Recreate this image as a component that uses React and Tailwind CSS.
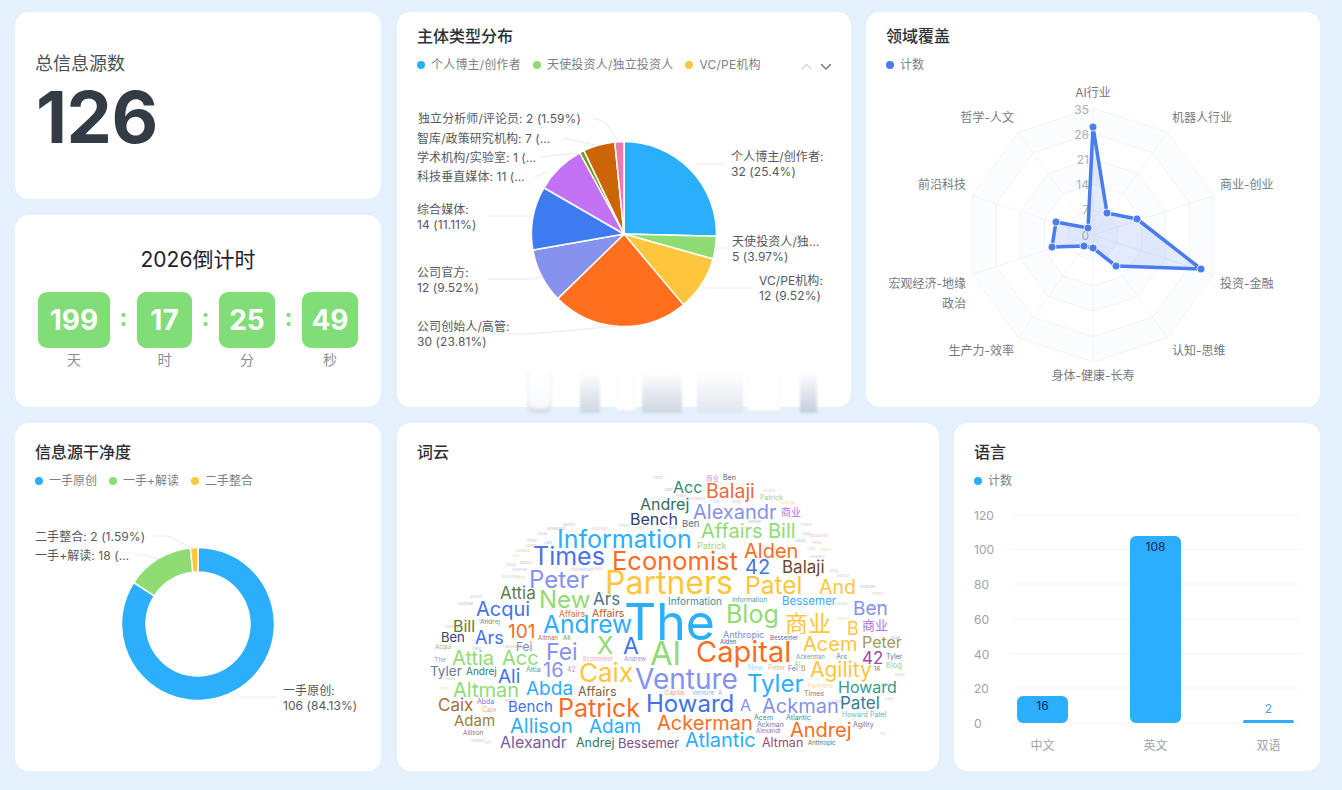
import { Fragment } from "react";

const BLUE = "#2baefc";
const GREEN = "#8fdc75";
const YELLOW = "#ffc53d";
const ORANGE = "#f96e22";
const PERI = "#8592ee";
const ROYAL = "#4272ea";

function polar(cx, cy, r, deg) {
  const a = ((deg - 90) * Math.PI) / 180;
  return [cx + r * Math.cos(a), cy + r * Math.sin(a)];
}

function slicePath(cx, cy, r, inner, from, to) {
  const [x1, y1] = polar(cx, cy, r, from);
  const [x2, y2] = polar(cx, cy, r, to);
  const large = to - from > 180 ? 1 : 0;
  if (!inner) return `M${cx} ${cy}L${x1} ${y1}A${r} ${r} 0 ${large} 1 ${x2} ${y2}Z`;
  const [x3, y3] = polar(cx, cy, inner, to);
  const [x4, y4] = polar(cx, cy, inner, from);
  return `M${x1} ${y1}A${r} ${r} 0 ${large} 1 ${x2} ${y2}L${x3} ${y3}A${inner} ${inner} 0 ${large} 0 ${x4} ${y4}Z`;
}

function Slices({ cx, cy, r, inner, data }) {
  const total = data.reduce((s, d) => s + d[0], 0);
  let at = 0;
  return data.map(([v, color]) => {
    const from = at;
    at += (v / total) * 360;
    return <path key={color} d={slicePath(cx, cy, r, inner, from, at)} fill={color} stroke="#fff" strokeWidth="1.5" />;
  });
}

function Legend({ items, wide }) {
  return (
    <div className={`mt-[7px] flex h-[22px] items-center gap-3 text-xs text-[#7b7f86] ${wide ? "tracking-[0.2px]" : ""}`}>
      {items.map(([label, color]) => (
        <div key={label} className="flex items-center gap-[6px]">
          <span className="h-2 w-2 rounded-full" style={{ background: color }} />
          <span>{label}</span>
        </div>
      ))}
    </div>
  );
}

function Title({ children }) {
  return <div className="h-[22px] text-base leading-[22px] font-medium text-[#2b2f36]">{children}</div>;
}

function Lead({ d }) {
  return <path d={d} fill="none" stroke="#e8eaed" strokeWidth="1" />;
}

function Label({ x, y, lines, anchor }) {
  return lines.map((t, i) => (
    <text key={t} x={x} y={y + i * 14.5} textAnchor={anchor} fontSize="12" letterSpacing="0.08" fill="#55595f">
      {t}
    </text>
  ));
}

function StatCard() {
  return (
    <div className="flex h-[187px] flex-col rounded-[14px] bg-white pt-[40px] pl-[20px]">
      <div className="text-[18px] leading-6 text-[#4a4f57]">总信息源数</div>
      <div className="mt-[1px] ml-[1px] text-[72px] leading-[80px] font-bold tracking-[-0.5px] text-[#333b45]">126</div>
    </div>
  );
}

function CountBox({ value, unit, width }) {
  return (
    <div className="flex flex-col items-center">
      <div className={`flex h-14 items-center justify-center rounded-[9px] bg-[#80dd78] text-[28px] font-bold text-white ${width}`}>
        {value}
      </div>
      <div className="mt-[2px] text-sm leading-5 text-[#8a8d92]">{unit}</div>
    </div>
  );
}

function Colon() {
  return <div className="flex h-[52px] w-[27px] items-center justify-center text-[24px] font-bold text-[#80dd78]">:</div>;
}

function CountdownCard() {
  return (
    <div className="flex h-[192px] flex-col items-center rounded-[14px] bg-white pt-[30px]">
      <div className="text-[21px] leading-[30px] text-[#1f2329]">2026倒计时</div>
      <div className="mt-[17px] flex">
        <CountBox value="199" unit="天" width="w-[72px]" />
        <Colon />
        <CountBox value="17" unit="时" width="w-[55px]" />
        <Colon />
        <CountBox value="25" unit="分" width="w-[56px]" />
        <Colon />
        <CountBox value="49" unit="秒" width="w-[56px]" />
      </div>
    </div>
  );
}

function PieCard() {
  const data = [
    [32, BLUE], [5, GREEN], [12, YELLOW], [30, "#ff6f1e"], [12, PERI],
    [14, "#3f7bf0"], [11, "#c472f5"], [1, "#6f9a1f"], [7, "#cc6508"], [2, "#ee79b0"],
  ];
  return (
    <div className="relative h-[395px] w-[454px] rounded-[14px] bg-white">
      <div className="relative px-5 pt-[13px]">
        <Title>主体类型分布</Title>
        <Legend wide items={[["个人博主/创作者", BLUE], ["天使投资人/独立投资人", GREEN], ["VC/PE机构", "#f6c944"]]} />
        <svg className="absolute top-[49px] right-[19px]" width="36" height="12" viewBox="0 0 36 12" fill="none" strokeWidth="1.3" strokeLinecap="round">
          <path d="M6 8l4.5-4.5L15 8" stroke="#d4d6da" />
          <path d="M25.5 3.5L30 8l4.5-4.5" stroke="#6b6f76" />
        </svg>
      </div>
      <svg className="block h-[331px] w-full" viewBox="397 76 454 331">
        <Slices cx={624} cy={234} r={92.5} data={data} />
        <Lead d="M691 170L697 164H725" />
        <Lead d="M716 248H727" />
        <Lead d="M700 285L706 288H753" />
        <Lead d="M487 334H530L618 326" />
        <Lead d="M488 279H535L543 276" />
        <Lead d="M487 216H532" />
        <Lead d="M535 177L547 172" />
        <Lead d="M540 157L578 153" />
        <Lead d="M563 138L595 145" />
        <Lead d="M593 118L605 122L618 141" />
        <Label x={731} y={161} lines={["个人博主/创作者:", "32 (25.4%)"]} />
        <Label x={732} y={246} lines={["天使投资人/独…", "5 (3.97%)"]} />
        <Label x={759} y={285} lines={["VC/PE机构:", "12 (9.52%)"]} />
        <Label x={417} y={331} lines={["公司创始人/高管:", "30 (23.81%)"]} />
        <Label x={417} y={277} lines={["公司官方:", "12 (9.52%)"]} />
        <Label x={417} y={214} lines={["综合媒体:", "14 (11.11%)"]} />
        <Label x={417} y={181} lines={["科技垂直媒体: 11 (…"]} />
        <Label x={417} y={162} lines={["学术机构/实验室: 1 (…"]} />
        <Label x={417} y={143} lines={["智库/政策研究机构: 7 (…"]} />
        <Label x={418} y={123} lines={["独立分析师/评论员: 2 (1.59%)"]} />
      </svg>
      {/* blurred strip lying over the card's bottom edge */}
      <div className="absolute top-[360px] left-[128px] flex h-[41px] w-[296px] blur-[1.5px]">
        <div className="ml-[2px] h-full w-[25px] rounded-b-lg bg-gradient-to-b from-white to-[#f6f8fb] shadow-[inset_0_-4px_3px_#d3d9e1]" />
        <div className="ml-[28px] h-full w-[20px] bg-gradient-to-b from-white to-[#ccd6e2]" />
        <div className="ml-[17px] h-full w-[18px] bg-white shadow-[inset_0_-2px_2px_#dfe4ea]" />
        <div className="ml-[7px] h-full w-[40px] bg-gradient-to-b from-white to-[#ccd5e0]" />
        <div className="ml-[15px] h-full w-[20px] bg-gradient-to-b from-white to-[#dfe6ef]" />
        <div className="h-full w-[26px] bg-gradient-to-b from-white to-[#dfe6ef]" />
        <div className="ml-[5px] h-full w-[32px] bg-white shadow-[inset_0_-2px_2px_#e3e8ee]" />
        <div className="ml-[20px] h-full w-[17px] bg-gradient-to-b from-white to-[#c3cddb]" />
      </div>
    </div>
  );
}

function RadarCard() {
  const cx = 1093;
  const cy = 235;
  const ring = (r) =>
    Array.from({ length: 10 }, (_, i) => polar(cx, cy, r, i * 36).join(",")).join(" ");
  const pts = [
    [1093, 127], [1107, 213], [1137, 219], [1201, 269], [1116, 266],
    [1093, 248], [1084, 246], [1052, 247], [1056, 222], [1088, 228],
  ];
  const right = [
    ["机器人行业", 1172, 122], ["商业-创业", 1220, 189], ["投资-金融", 1220, 288], ["认知-思维", 1172, 355],
  ];
  const left = [
    ["哲学-人文", 1014, 122], ["前沿科技", 966, 189], ["宏观经济-地缘", 966, 288], ["政治", 966, 308], ["生产力-效率", 1014, 355],
  ];
  const ticks = [["35", 114], ["28", 139], ["21", 164], ["14", 189], ["7", 214], ["0", 240]];
  return (
    <div className="h-[395px] w-[454px] rounded-[14px] bg-white">
      <div className="px-5 pt-[13px]">
        <Title>领域覆盖</Title>
        <Legend items={[["计数", "#4a7cee"]]} />
      </div>
      <svg className="block h-[331px] w-full" viewBox="866 76 454 331">
        {[127, 101.6, 76.2, 50.8, 25.4].map((r, i) => (
          <polygon key={r} points={ring(r)} fill={i % 2 ? "#fff" : "#fbfcfe"} stroke="#f3f4f7" strokeWidth="1" />
        ))}
        {Array.from({ length: 10 }, (_, i) => {
          const [x, y] = polar(cx, cy, 127, i * 36);
          return <line key={i} x1={cx} y1={cy} x2={x} y2={y} stroke="#f3f4f7" />;
        })}
        {ticks.map(([t, y]) => (
          <text key={t} x={1089} y={y} textAnchor="end" fontSize="12" fill="#adafb3">{t}</text>
        ))}
        <polygon points={pts.map((p) => p.join(",")).join(" ")} fill="#4a7cee" fillOpacity="0.16" stroke="#4a7cee" strokeWidth="3.5" strokeLinejoin="round" />
        {pts.map(([x, y]) => (
          <circle key={x + "-" + y} cx={x} cy={y} r="4" fill="#4a7cee" stroke="#fff" strokeWidth="0.8" />
        ))}
        <text x={1093} y={97} textAnchor="middle" fontSize="12" fill="#75797f">AI行业</text>
        <text x={1093} y={380} textAnchor="middle" fontSize="12" fill="#75797f">身体-健康-长寿</text>
        {right.map(([t, x, y]) => (
          <text key={t} x={x} y={y} fontSize="12" fill="#75797f">{t}</text>
        ))}
        {left.map(([t, x, y]) => (
          <text key={t} x={x} y={y} textAnchor="end" fontSize="12" fill="#75797f">{t}</text>
        ))}
      </svg>
    </div>
  );
}

function DonutCard() {
  return (
    <div className="h-[348px] w-[366px] rounded-[14px] bg-white">
      <div className="px-5 pt-[18px]">
        <Title>信息源干净度</Title>
        <Legend items={[["一手原创", BLUE], ["一手+解读", GREEN], ["二手整合", YELLOW]]} />
      </div>
      <svg className="block h-[279px] w-full" viewBox="15 492 366 279">
        <Slices cx={198} cy={624} r={76.5} inner={52} data={[[106, BLUE], [18, GREEN], [2, YELLOW]]} />
        <Lead d="M153 536H168L192 548" />
        <Lead d="M137 555H146L158 559" />
        <Lead d="M236 692L240 697H277" />
        <Label x={35} y={541} lines={["二手整合: 2 (1.59%)"]} />
        <Label x={35} y={560} lines={["一手+解读: 18 (…"]} />
        <Label x={283} y={695} lines={["一手原创:", "106 (84.13%)"]} />
      </svg>
    </div>
  );
}

const WORDS = [
  ["The", 624, 640, 50, BLUE], ["Partners", 605, 594, 32, YELLOW], ["Capital", 696, 662, 29, ORANGE],
  ["Venture", 635, 689, 28, PERI], ["Economist", 612, 570, 25.5, ORANGE], ["Information", 557, 548, 25, BLUE],
  ["Times", 533, 565, 25, "#4b72e8"], ["Peter", 529, 588, 24, PERI], ["New", 539, 608, 24, GREEN],
  ["Attia", 500, 599, 17, "#5c7a52"], ["Ars", 593, 605, 17, "#4c7294"], ["Affairs", 559, 617, 8.5, "#e26b4a"],
  ["Affairs", 592, 617, 10.5, "#b5572f"], ["Acqui", 476, 616, 20, ROYAL], ["Information", 668, 605, 10, "#3d8ea0"],
  ["Andrej", 640, 510, 16, "#2f6f5e"], ["Acc", 673, 493, 16, "#2e8b70"], ["Bench", 630, 525, 16, "#2e4272"],
  ["Balaji", 706, 498, 19.5, "#f0673a"], ["Alexandr", 693, 519, 20, "#8592e8"], ["商业", 781, 516, 10, "#b070e0"],
  ["商业", 706, 481, 6.5, "#c090e0"], ["Ben", 723, 480, 7, "#555b66"], ["Patrick", 760, 500, 7, "#a5cf7a"],
  ["Affairs", 701, 538, 20, GREEN], ["Bill", 768, 538, 20, GREEN], ["Ben", 682, 527, 9.5, "#5a6a8a"],
  ["Patrick", 697, 549, 9, "#a5cf7a"], ["Alden", 744, 558, 20, ORANGE], ["42", 745, 574, 20, ROYAL],
  ["Balaji", 782, 573, 17, "#6b4a30"], ["Patel", 745, 594, 24.5, YELLOW], ["And", 819, 594, 19.5, YELLOW],
  ["Information", 732, 602, 6.5, "#4aa0a0"], ["Bessemer", 782, 605, 11.5, "#3aa8f8"], ["Ben", 853, 615, 19, "#8592e8"],
  ["Blog", 726, 623, 25, GREEN], ["商业", 785, 632, 23, YELLOW], ["B", 847, 635, 18, YELLOW],
  ["商业", 862, 630, 13, "#b070e0"], ["Anthropic", 723, 638, 9, "#7a8ae0"], ["Alden", 720, 644, 6, "#4a6a9a"],
  ["Bessemer", 770, 640, 6, "#7060a0"], ["Acem", 803, 651, 20, YELLOW], ["Peter", 862, 648, 16, "#a69850"],
  ["42", 862, 664, 17, "#a04a9a"], ["Tyler", 886, 659, 7, "#5a7a90"], ["Blog", 886, 668, 7.5, "#a5cf7a"],
  ["Ackerman", 796, 659, 6, "#6aa0b0"], ["Ars", 836, 659, 7, "#5a90a0"], ["Al", 794, 667, 7, GREEN],
  ["New", 748, 670, 7, "#a0d8f8"], ["Peter", 768, 670, 7, "#f0b890"], ["Fei", 788, 671, 7, "#6080c0"],
  ["B", 801, 671, 7, "#b09050"], ["Agility", 810, 677, 21, YELLOW], ["16", 874, 671, 6, "#b06030"],
  ["Tyler", 747, 692, 24, BLUE], ["Partners", 808, 688, 6, "#fdd89a"], ["Times", 804, 696, 7, "#b06a6a"],
  ["Howard", 838, 693, 16, "#3a9a8a"], ["Patel", 840, 709, 17, "#3a7a9a"], ["Ackman", 762, 713, 20, "#8592e8"],
  ["Howard", 646, 712, 24, ROYAL], ["A", 740, 711, 16, "#8592e8"], ["Venture", 692, 695, 6, "#90b0f0"],
  ["A", 718, 695, 6, "#90b0f0"], ["Capital", 665, 695, 6, "#f0a070"], ["Ackerman", 657, 730, 20, ORANGE],
  ["Atlantic", 685, 747, 20, BLUE], ["Altman", 762, 747, 12.5, "#a04a6a"], ["Anthropic", 808, 745, 6, "#4a7a70"],
  ["Andrej", 790, 737, 20, ORANGE], ["Acem", 754, 720, 7, "#4a8a7a"], ["Atlantic", 786, 720, 7, "#4a8a9a"],
  ["Ackman", 757, 727, 7, "#6080b0"], ["Alexandr", 756, 733, 6, "#a070c0"], ["Howard", 842, 717, 7, "#6ac0b0"],
  ["Patel", 870, 717, 7, "#60b0c0"], ["Agility", 853, 727, 7, "#6a7a90"], ["Bill", 453, 632, 16, "#6a7a30"],
  ["Andrej", 480, 624, 6.5, "#6a9a80"], ["Ben", 441, 642, 13, "#2e4272"], ["Ars", 475, 644, 18, ROYAL],
  ["101", 508, 638, 19, ORANGE], ["Andrew", 543, 633, 24.5, BLUE], ["Altman", 538, 640, 6, "#b06a6a"],
  ["Ali", 563, 640, 6.5, "#6a9a50"], ["Fei", 516, 651, 12, "#7a90b0"], ["Acqui", 435, 649, 6, "#9ab090"],
  ["Fei", 546, 660, 23, PERI], ["X", 597, 654, 24, GREEN], ["A", 623, 654, 23, ROYAL],
  ["Al", 650, 665, 33, GREEN], ["Attia", 452, 665, 20, GREEN], ["Acc", 502, 665, 20, GREEN],
  ["The", 434, 662, 6.5, "#6ab0e8"], ["Tyler", 430, 676, 13.5, "#6a7a98"], ["Andrej", 466, 675, 10, "#2e7a70"],
  ["Ali", 498, 683, 19, ROYAL], ["Attia", 526, 672, 7, "#6aa080"], ["16", 543, 677, 20, PERI],
  ["42", 567, 672, 7, "#c090d0"], ["Economist", 583, 661, 6, "#f0a0c0"], ["Andrew", 624, 661, 6, "#a090f0"],
  ["Caix", 579, 682, 26, YELLOW], ["Altman", 453, 697, 20, GREEN], ["Abda", 526, 695, 19, BLUE],
  ["Affairs", 578, 696, 12.5, "#7a6040"], ["Caix", 438, 711, 17, "#b06a3a"], ["Abda", 477, 704, 7, "#7080d0"],
  ["Caix", 482, 712, 7, "#f0b070"], ["Bench", 508, 712, 15, ROYAL], ["Patrick", 558, 717, 25, ORANGE],
  ["Adam", 454, 726, 15, "#9a8040"], ["Allison", 510, 733, 20, BLUE], ["Adam", 589, 733, 19, BLUE],
  ["Allison", 463, 735, 6.5, "#9a7060"], ["Alexandr", 500, 748, 16, "#7a5aa0"], ["Andrej", 576, 747, 12.5, "#2e7a60"],
  ["Bessemer", 618, 748, 13, "#7a5090"],
];

// tiny filler words around the edge of the cloud
const TINY = [
  [563, 526], [592, 530], [618, 527], [635, 529], [668, 529], [547, 530], [537, 535], [527, 542], [544, 544],
  [525, 547], [515, 552], [513, 557], [507, 566], [520, 564], [512, 571], [570, 571], [580, 571],
  [593, 570], [502, 578], [515, 579], [653, 479], [664, 491], [676, 497], [690, 500], [713, 503], [732, 503],
  [763, 492], [780, 504], [800, 526], [748, 523], [802, 535], [810, 537], [795, 542], [812, 544], [807, 550],
  [820, 551], [810, 558], [808, 565], [830, 572], [837, 577], [860, 588], [872, 595], [835, 605], [838, 620],
  [870, 607], [890, 639], [895, 676], [885, 700], [880, 686], [830, 703], [880, 735], [835, 728], [470, 598],
  [458, 605], [478, 622], [445, 628], [472, 650], [505, 648], [445, 680], [440, 690], [470, 688], [505, 702],
  [470, 742], [485, 744],
];
const TINY_NAMES = ["Bench", "Ackman", "Times", "Altman", "Patel", "Bessemer", "Abda", "Peter", "Caix", "Adam", "Howard", "Ars", "Blog"];
const TINY_COLORS = ["#a8c8ec", "#ecc4b8", "#c8e2b8", "#f2dca8", "#c4caf0", "#c0c0c0", "#dcc0ec", "#e8c0d8"];

function CloudCard() {
  return (
    <div className="h-[348px] w-[542px] rounded-[14px] bg-white">
      <div className="px-5 pt-[18px]">
        <Title>词云</Title>
      </div>
      <svg className="block h-[308px] w-full" viewBox="397 463 542 308">
        {TINY.map(([x, y], i) => (
          <text key={x + "-" + y} x={x} y={y} fontSize="4" fill={TINY_COLORS[i % TINY_COLORS.length]}>
            {TINY_NAMES[i % TINY_NAMES.length]}
          </text>
        ))}
        {WORDS.map(([t, x, y, size, color]) => (
          <text key={t + x + y} x={x} y={y} fontSize={size} fill={color}>{t}</text>
        ))}
      </svg>
    </div>
  );
}

function BarCard() {
  const axis = [[120, 515], [100, 549.5], [80, 584], [60, 619], [40, 654], [20, 688], [0, 723]];
  const bars = [
    { x: 1017, y: 696, h: 27, r: 6, name: "中文", v: "16", ly: 710, lc: "#0e2b4d" },
    { x: 1130, y: 536, h: 187, r: 6, name: "英文", v: "108", ly: 551, lc: "#0e2b4d" },
    { x: 1243, y: 720, h: 3, r: 1.5, name: "双语", v: "2", ly: 713, lc: "#4a9fe0" },
  ];
  return (
    <div className="h-[348px] w-[366px] rounded-[14px] bg-white">
      <div className="px-5 pt-[18px]">
        <Title>语言</Title>
        <Legend items={[["计数", BLUE]]} />
      </div>
      <svg className="block h-[279px] w-full" viewBox="954 492 366 279">
        {axis.map(([v, y]) => (
          <Fragment key={v}>
            <line x1="1012" x2="1300" y1={y} y2={y} stroke="#f3f4f6" />
            <text x="974" y={y + 4.5} fontSize="12" fill="#a0a3a8">{v}</text>
          </Fragment>
        ))}
        {bars.map((b) => (
          <Fragment key={b.name}>
            <rect x={b.x} y={b.y} width="51" height={b.h} rx={b.r} fill={BLUE} />
            <text x={b.x + 25.5} y={b.ly} textAnchor="middle" fontSize="12" fill={b.lc}>{b.v}</text>
            <text x={b.x + 25.5} y="749.5" textAnchor="middle" fontSize="12" fill="#a0a3a8">{b.name}</text>
          </Fragment>
        ))}
      </svg>
    </div>
  );
}

export default function App() {
  return (
    <div className="h-[790px] w-[1342px] overflow-hidden bg-[#e4f1fd] pt-3 pl-[15px] font-['Inter','Noto_Sans_CJK_SC',sans-serif]">
      <div className="flex">
        <div className="flex w-[366px] flex-col gap-4">
          <StatCard />
          <CountdownCard />
        </div>
        <div className="ml-4">
          <PieCard />
        </div>
        <div className="ml-[15px]">
          <RadarCard />
        </div>
      </div>
      <div className="mt-4 flex">
        <DonutCard />
        <div className="ml-4">
          <CloudCard />
        </div>
        <div className="ml-[15px]">
          <BarCard />
        </div>
      </div>
    </div>
  );
}
